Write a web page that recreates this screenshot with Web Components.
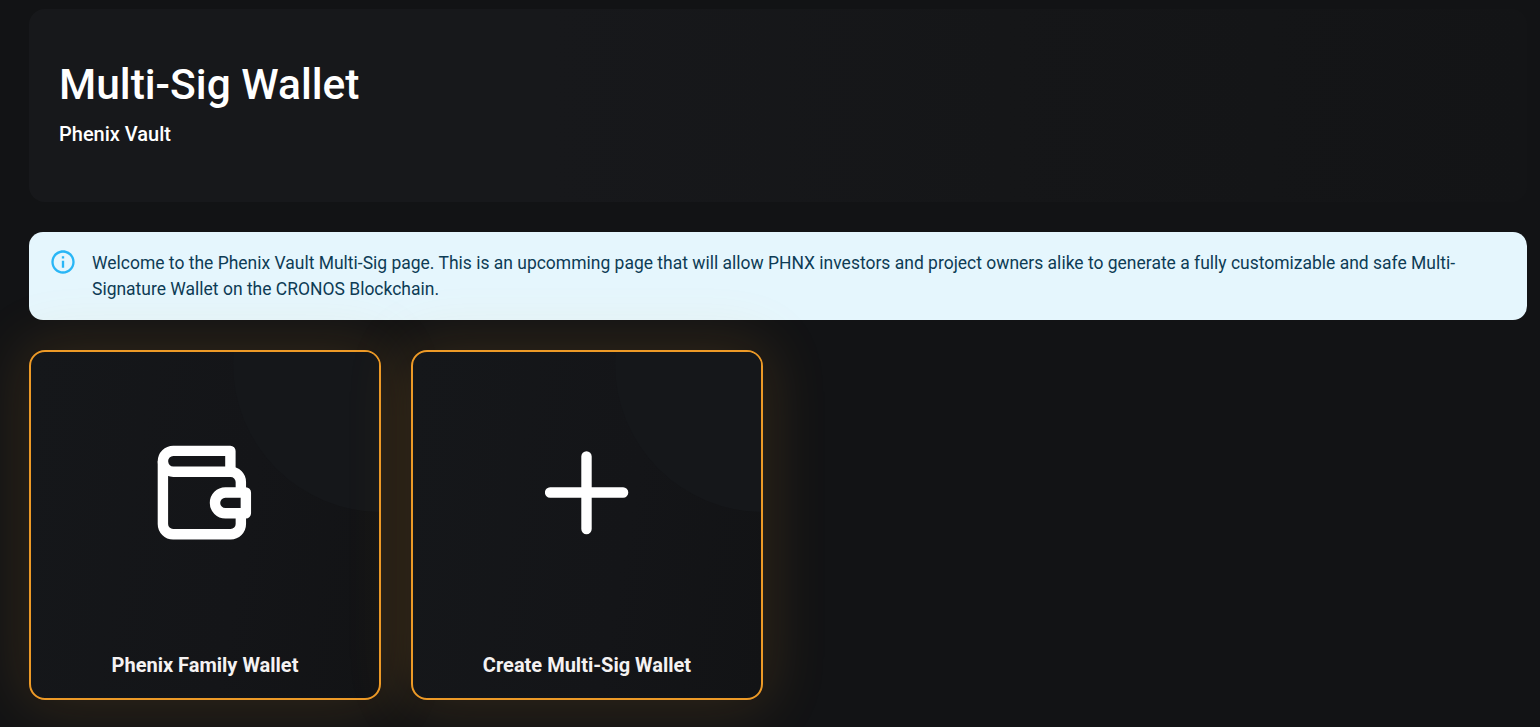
<!DOCTYPE html>
<html>
<head>
<meta charset="utf-8">
<style>
  html, body { margin: 0; height: 100%; }
  body {
    background: #121315;
    font-family: Roboto, "Liberation Sans", sans-serif;
    overflow: hidden;
  }
</style>
</head>
<body>
<vault-page>
  <page-header title="Multi-Sig Wallet" subtitle="Phenix Vault"></page-header>
  <info-alert>Welcome to the Phenix Vault Multi-Sig page. This is an upcomming page that will allow PHNX investors and project owners alike to generate a fully customizable and safe Multi-Signature Wallet on the CRONOS Blockchain.</info-alert>
  <card-row>
    <action-card label="Phenix Family Wallet" icon="wallet"></action-card>
    <action-card label="Create Multi-Sig Wallet" icon="plus"></action-card>
  </card-row>
</vault-page>

<script>
class VaultPage extends HTMLElement {
  constructor() {
    super();
    this.attachShadow({ mode: 'open' });
    this.shadowRoot.innerHTML = `
      <style>
        :host {
          display: flex;
          flex-direction: column;
          gap: 30px;
          padding: 9px 13px 0 29px;
        }
      </style>
      <slot></slot>
    `;
  }
}

class PageHeader extends HTMLElement {
  constructor() {
    super();
    this.attachShadow({ mode: 'open' });
    this.shadowRoot.innerHTML = `
      <style>
        :host {
          display: block;
          height: 193px;
          box-sizing: border-box;
          padding: 48px 30px 0;
          border-radius: 16px;
          background: linear-gradient(90deg, #17181b 0%, #17181b 35%, #151618 65%, #131416 100%);
          color: #fff;
        }
        h1 { margin: 0; font-size: 42.5px; line-height: 56px; font-weight: 500; }
        p { margin: 6px 0 0; font-size: 20px; line-height: 30px; font-weight: 500; }
      </style>
      <h1></h1>
      <p></p>
    `;
    this.shadowRoot.querySelector('h1').textContent = this.getAttribute('title');
    this.shadowRoot.querySelector('p').textContent = this.getAttribute('subtitle');
  }
}

class InfoAlert extends HTMLElement {
  constructor() {
    super();
    this.attachShadow({ mode: 'open' });
    this.shadowRoot.innerHTML = `
      <style>
        :host {
          display: flex;
          gap: 15px;
          height: 88px;
          box-sizing: border-box;
          padding: 16px 20px 0;
          border-radius: 14px;
          background: #e5f6fd;
          color: #0d3c55;
          font-size: 17.49px;
          line-height: 26px;
        }
        svg { flex: none; width: 28px; height: 28px; }
        div { flex: 1; margin-top: 2px; padding-right: 40px; }
      </style>
      <svg viewBox="0 0 24 24" fill="#29b6f6">
        <path d="M11 7h2v2h-2zm0 4h2v6h-2zm1-9C6.48 2 2 6.48 2 12s4.48 10 10 10 10-4.48 10-10S17.52 2 12 2zm0 18c-4.41 0-8-3.59-8-8s3.59-8 8-8 8 3.59 8 8-3.59 8-8 8z"/>
      </svg>
      <div><slot></slot></div>
    `;
  }
}

class CardRow extends HTMLElement {
  constructor() {
    super();
    this.attachShadow({ mode: 'open' });
    this.shadowRoot.innerHTML = `
      <style>
        :host { display: flex; gap: 30px; }
      </style>
      <slot></slot>
    `;
  }
}

const ICONS = {
  wallet: `<svg viewBox="0 0 96 96" width="96" height="96" fill="none" stroke="#fff" stroke-width="10.4" stroke-linejoin="round" stroke-linecap="butt">
      <path d="M73.400 26.700V5.900H16.300A10.400 10.400 0 0 0 5.900 16.300V79A10.200 10.200 0 0 0 16.100 89.200H73.600A10.200 10.200 0 0 0 83.850 79V68.300"/>
      <path d="M83.850 47.500V37A10.300 10.300 0 0 0 73.500 26.700H16.300A10.400 10.400 0 0 1 5.900 16.300"/>
      <path d="M88.850 47.500H68.400A10.400 10.400 0 0 0 68.400 68.300H88.850Z"/>
    </svg>`,
  plus: `<svg viewBox="0 0 84 84" width="84" height="84" fill="none" stroke="#fff" stroke-width="10.4" stroke-linecap="round">
      <path d="M41.500 5.400V78.100M5.100 41.500H78.100"/>
    </svg>`
};

class ActionCard extends HTMLElement {
  constructor() {
    super();
    this.attachShadow({ mode: 'open' });
    const icon = this.getAttribute('icon');
    this.shadowRoot.innerHTML = `
      <style>
        :host {
          display: flex;
          flex-direction: column;
          align-items: center;
          position: relative;
          box-sizing: border-box;
          width: 352px;
          height: 350px;
          border: 2px solid #ed9a27;
          border-radius: 16px;
          background: linear-gradient(100deg, #15171a 0%, #141518 60%, #121315 100%);
          box-shadow: 0 0 60px 6px rgba(237, 154, 39, 0.15);
          color: #f5f2f2;
        }
        .clip {
          position: absolute;
          inset: 0;
          overflow: hidden;
          border-radius: 14px;
        }
        .blob {
          position: absolute;
          top: -136px;
          right: -150px;
          width: 296px;
          height: 296px;
          border-radius: 50%;
          background: #15171a;
        }
        .icon {
          position: relative;
          flex: none;
          height: 96px;
          margin-top: 93px;
          display: flex;
          align-items: center;
        }
        .label {
          position: relative;
          margin-top: auto;
          margin-bottom: 18px;
          font-size: 20px;
          line-height: 30px;
          font-weight: 700;
        }
      </style>
      <div class="clip"><div class="blob"></div></div>
      <div class="icon">${ICONS[icon]}</div>
      <div class="label"></div>
    `;
    this.shadowRoot.querySelector('.label').textContent = this.getAttribute('label');
  }
}

customElements.define('vault-page', VaultPage);
customElements.define('page-header', PageHeader);
customElements.define('info-alert', InfoAlert);
customElements.define('card-row', CardRow);
customElements.define('action-card', ActionCard);
</script>
</body>
</html>
